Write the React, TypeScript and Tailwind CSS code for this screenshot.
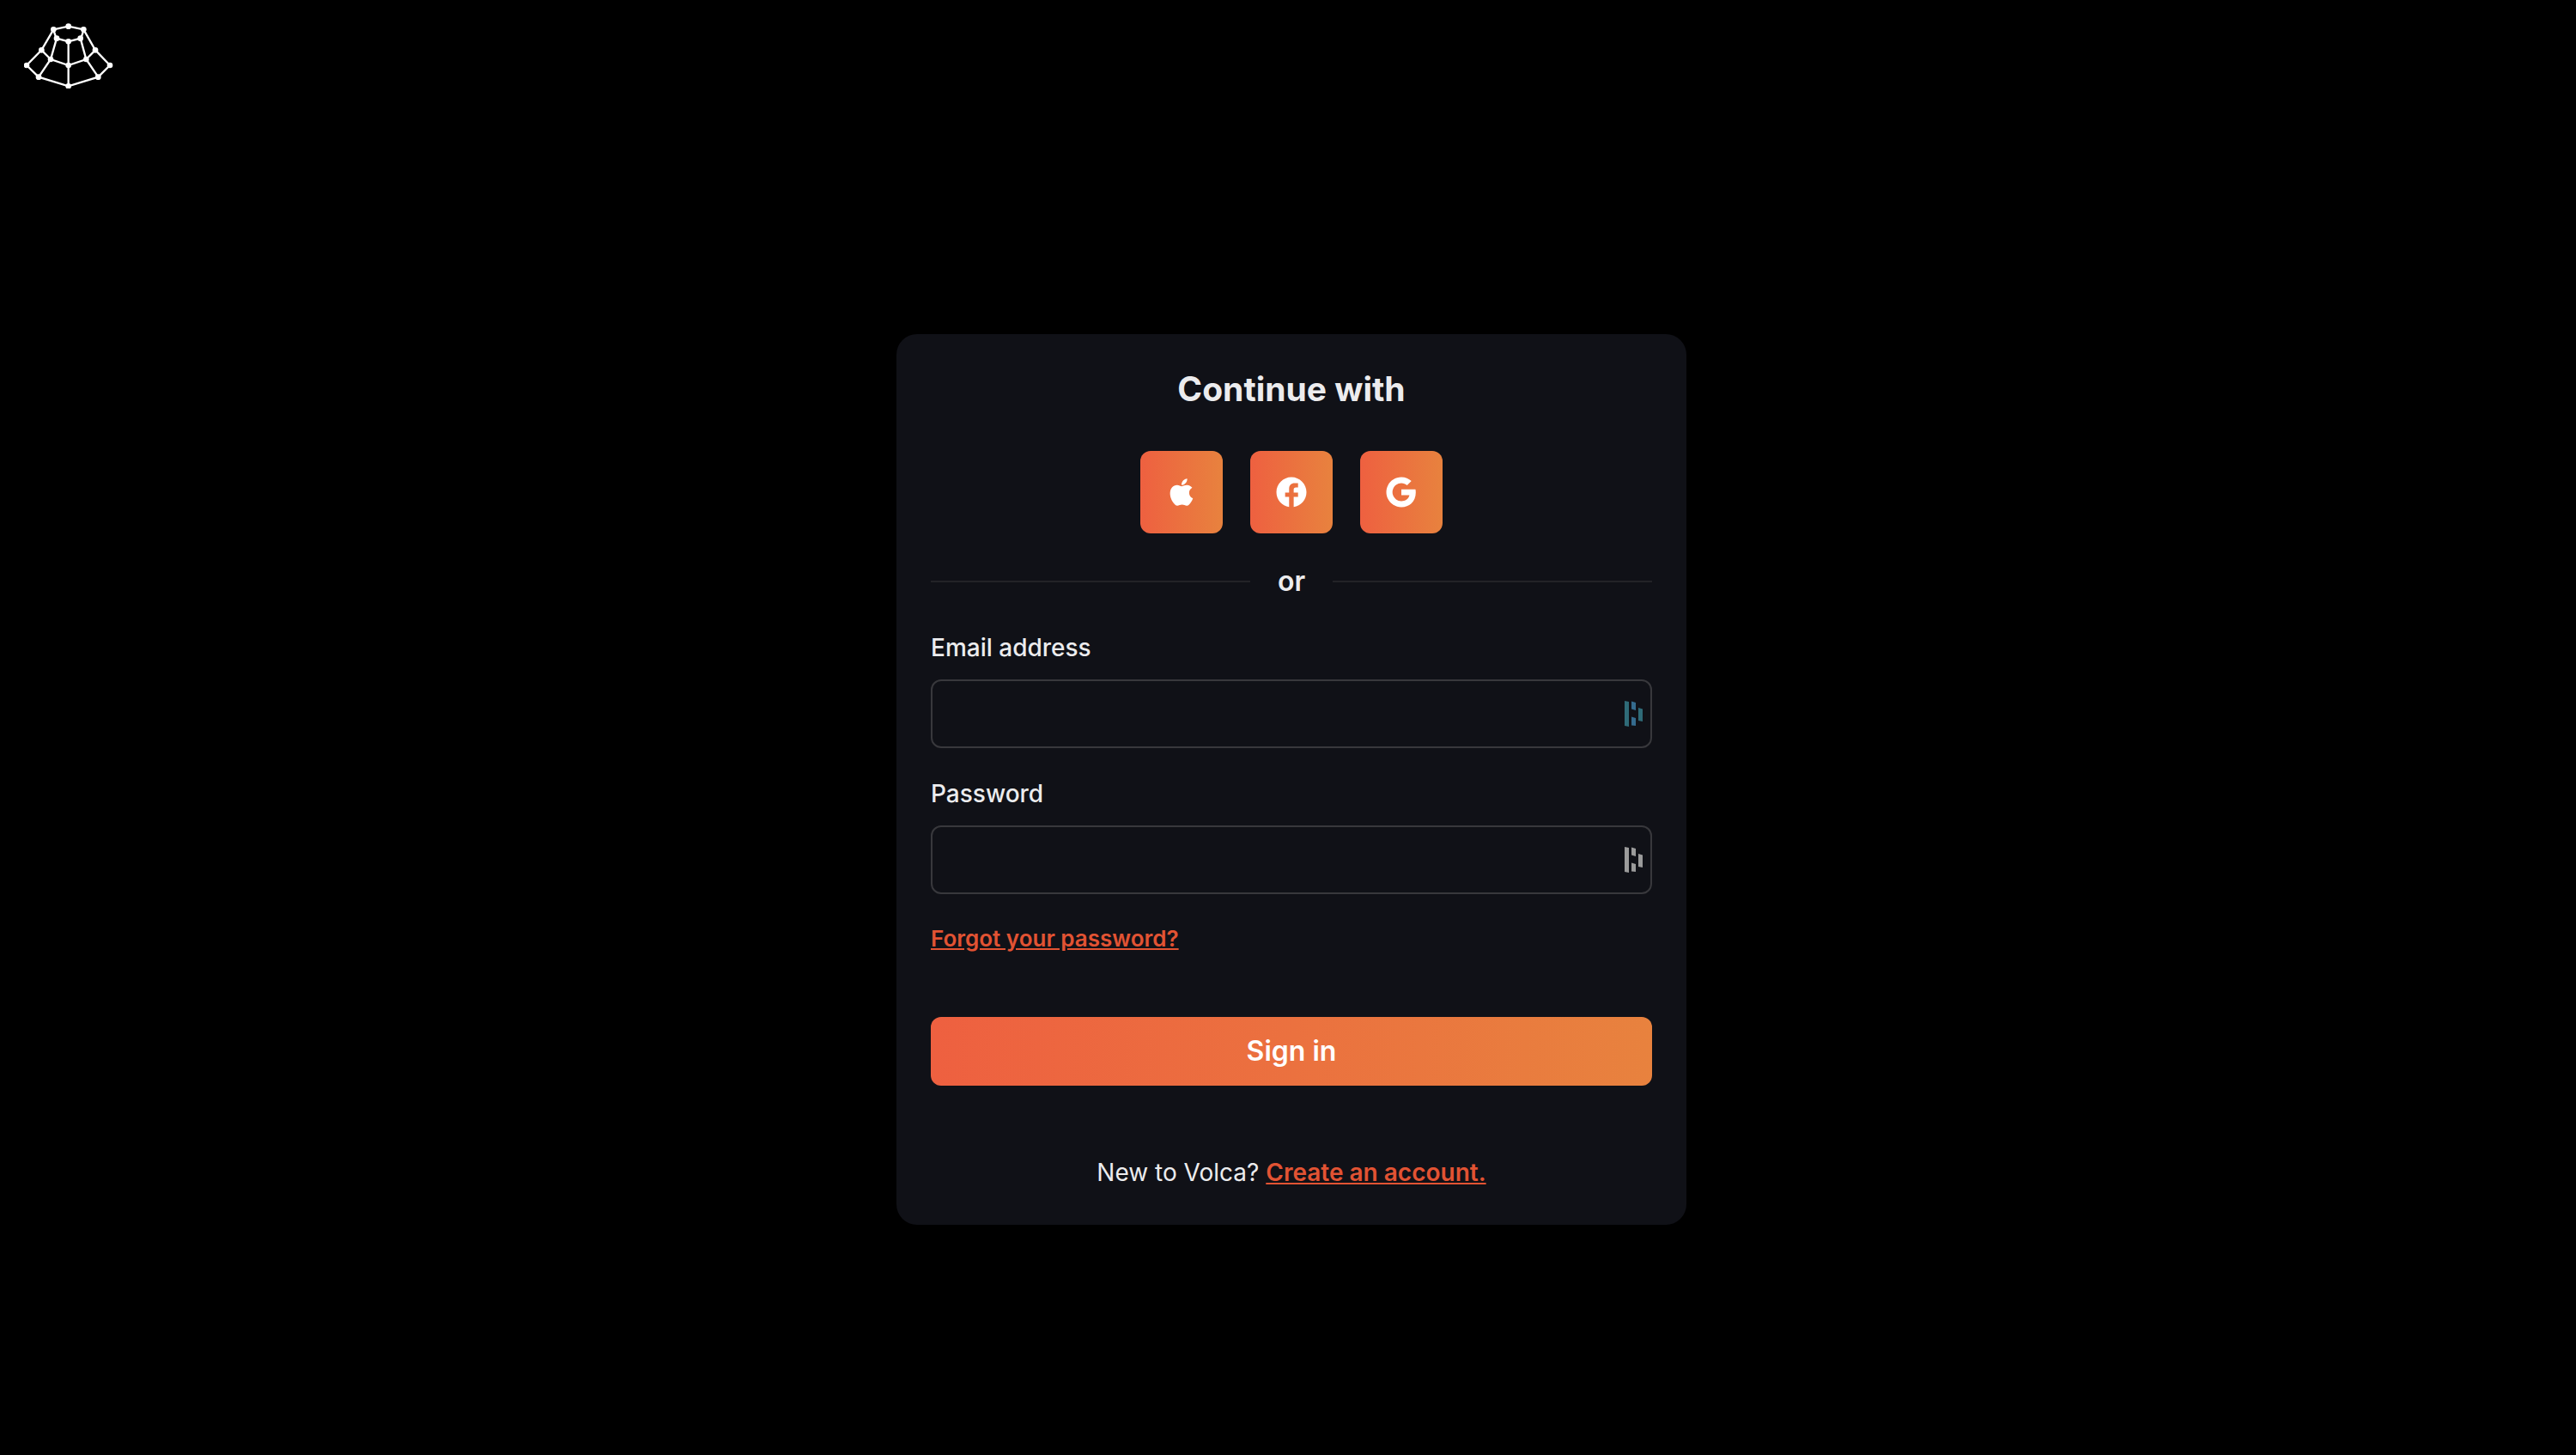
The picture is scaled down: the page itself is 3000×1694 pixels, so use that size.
import type { ReactNode } from "react";
import { RiGoogleFill } from "react-icons/ri";

const links = [
  "M157 73 209 62 262 73",
  "M157 73Q162 94 168 104L209 115 251 104Q258 94 262 73",
  "M157 73 115 145 63 198 105 239 209 271 313 239 354 198 303 145 262 73",
  "M168 104 147 177 105 239",
  "M251 104 271 177 313 239",
  "M209 115V271",
  "M115 145 147 177 209 198 271 177 303 145",
];

const nodes = [
  [157, 73], [209, 62], [262, 73], [168, 104], [209, 115], [251, 104], [115, 145], [147, 177],
  [209, 198], [271, 177], [303, 145], [63, 198], [105, 239], [209, 271], [313, 239], [354, 198],
];

function Logo() {
  return (
    <svg viewBox="54 51 312 228" className="h-[76px] w-[104px]" role="img" aria-label="Volca">
      <g fill="none" stroke="white" strokeWidth="7">
        {links.map((d) => (
          <path key={d} d={d} />
        ))}
      </g>
      {nodes.map(([x, y]) => (
        <circle key={`${x}-${y}`} cx={x} cy={y} r="10" fill="white" />
      ))}
    </svg>
  );
}

function AppleIcon() {
  return (
    <svg viewBox="0 0 24 24" fill="currentColor" className="size-[42px]" aria-hidden="true">
      <path d="M17.05 20.28c-.98.95-2.05.8-3.08.35-1.09-.46-2.09-.48-3.24 0-1.44.62-2.2.44-3.06-.35C2.79 15.25 3.51 7.59 9.05 7.31c1.35.07 2.29.74 3.08.8 1.18-.24 2.31-.93 3.57-.84 1.51.12 2.65.72 3.4 1.8-3.12 1.87-2.38 5.98.48 7.13-.57 1.5-1.31 2.99-2.54 4.09zM12.03 7.25c-.15-2.23 1.66-4.07 3.74-4.25.29 2.58-2.34 4.5-3.74 4.25z" />
    </svg>
  );
}

function FacebookIcon() {
  return (
    <svg viewBox="0 0 24 24" fill="currentColor" className="size-[42px]" aria-hidden="true">
      <path d="M22 12c0-5.52-4.48-10-10-10S2 6.48 2 12c0 4.990 3.660 9.130 8.440 9.880v-6.680H7.800v-2.900h2.640V9.800c0-2.400 1.400-3.800 3.700-3.800h2.260v2.800h-1.300c-1.200 0-1.600.6-1.600 1.500v2h2.900v2.900h-2.900v6.700C18.340 21.130 22 16.990 22 12z" />
    </svg>
  );
}

function KeyMark({ outer, inner }: { outer: string; inner: string }) {
  return (
    <svg viewBox="0 0 21 30" className="absolute top-1/2 right-[11px] h-[30px] w-[21px] -translate-y-1/2" aria-hidden="true">
      <path d="M0 0 5 1V30L0 29Z" fill={outer} />
      <path d="M8 .5 13 2V11L8 9.500Z" fill={inner} />
      <path d="M8 18.500 13 20V29L8 28.500Z" fill={inner} />
      <path d="M16 8 21 9.500V24L16 23Z" fill={outer} />
    </svg>
  );
}

type FieldProps = { id: string; label: string; type: string; outer: string; inner: string };

function Field({ id, label, type, outer, inner }: FieldProps) {
  return (
    <div className="mt-8">
      <label htmlFor={id} className="block text-[28px] leading-[42px] font-medium">
        {label}
      </label>
      <div className="relative mt-4">
        <input
          id={id}
          type={type}
          className="block h-20 w-full rounded-xl border-2 border-[#38383c] bg-transparent pr-12 pl-8 text-[28px] outline-none"
        />
        <KeyMark outer={outer} inner={inner} />
      </div>
    </div>
  );
}

const providers: { name: string; icon: ReactNode }[] = [
  { name: "Apple", icon: <AppleIcon /> },
  { name: "Facebook", icon: <FacebookIcon /> },
  { name: "Google", icon: <RiGoogleFill className="size-[42px]" aria-hidden="true" /> },
];

export default function App() {
  return (
    <div className="flex min-h-screen flex-col bg-black font-['Inter',sans-serif] text-[#ececee]">
      <header className="h-[120px] pt-[27px] pl-7">
        <Logo />
      </header>
      <main className="flex flex-1 items-center justify-center pl-2">
        <form className="w-full max-w-[920px] rounded-3xl bg-[#101117] p-10">
          <h1 className="text-center text-[39px] leading-12 font-bold">Continue with</h1>
          <div className="mt-12 flex justify-center gap-8">
            {providers.map(({ name, icon }) => (
              <button
                key={name}
                type="button"
                aria-label={name}
                className="flex size-24 items-center justify-center rounded-xl bg-linear-to-r/srgb from-[#ee6040] to-[#e8823e] text-white"
              >
                {icon}
              </button>
            ))}
          </div>
          <div className="mt-8 flex items-center">
            <div className="h-0.5 flex-1 bg-[#232327]" />
            <p className="w-24 text-center text-[32px] leading-12 font-semibold">or</p>
            <div className="h-0.5 flex-1 bg-[#232327]" />
          </div>
          <Field id="email" label="Email address" type="email" outer="#2f6b78" inner="#356b8e" />
          <Field id="password" label="Password" type="password" outer="#9b9b9b" inner="#9b9b9b" />
          <p className="mt-8 text-[26px] leading-[39px]">
            <a href="#forgot" className="font-semibold text-[#e25333] underline">
              Forgot your password?
            </a>
          </p>
          <button
            type="submit"
            className="mt-18 block h-20 w-full rounded-xl bg-linear-to-r/srgb from-[#ee6040] to-[#e8823e] text-[32px] font-semibold text-white"
          >
            Sign in
          </button>
          <p className="mt-20 text-center text-[28px] leading-[42px]">
            New to Volca?{" "}
            <a href="#register" className="font-semibold text-[#e25333] underline">
              Create an account.
            </a>
          </p>
        </form>
      </main>
    </div>
  );
}
